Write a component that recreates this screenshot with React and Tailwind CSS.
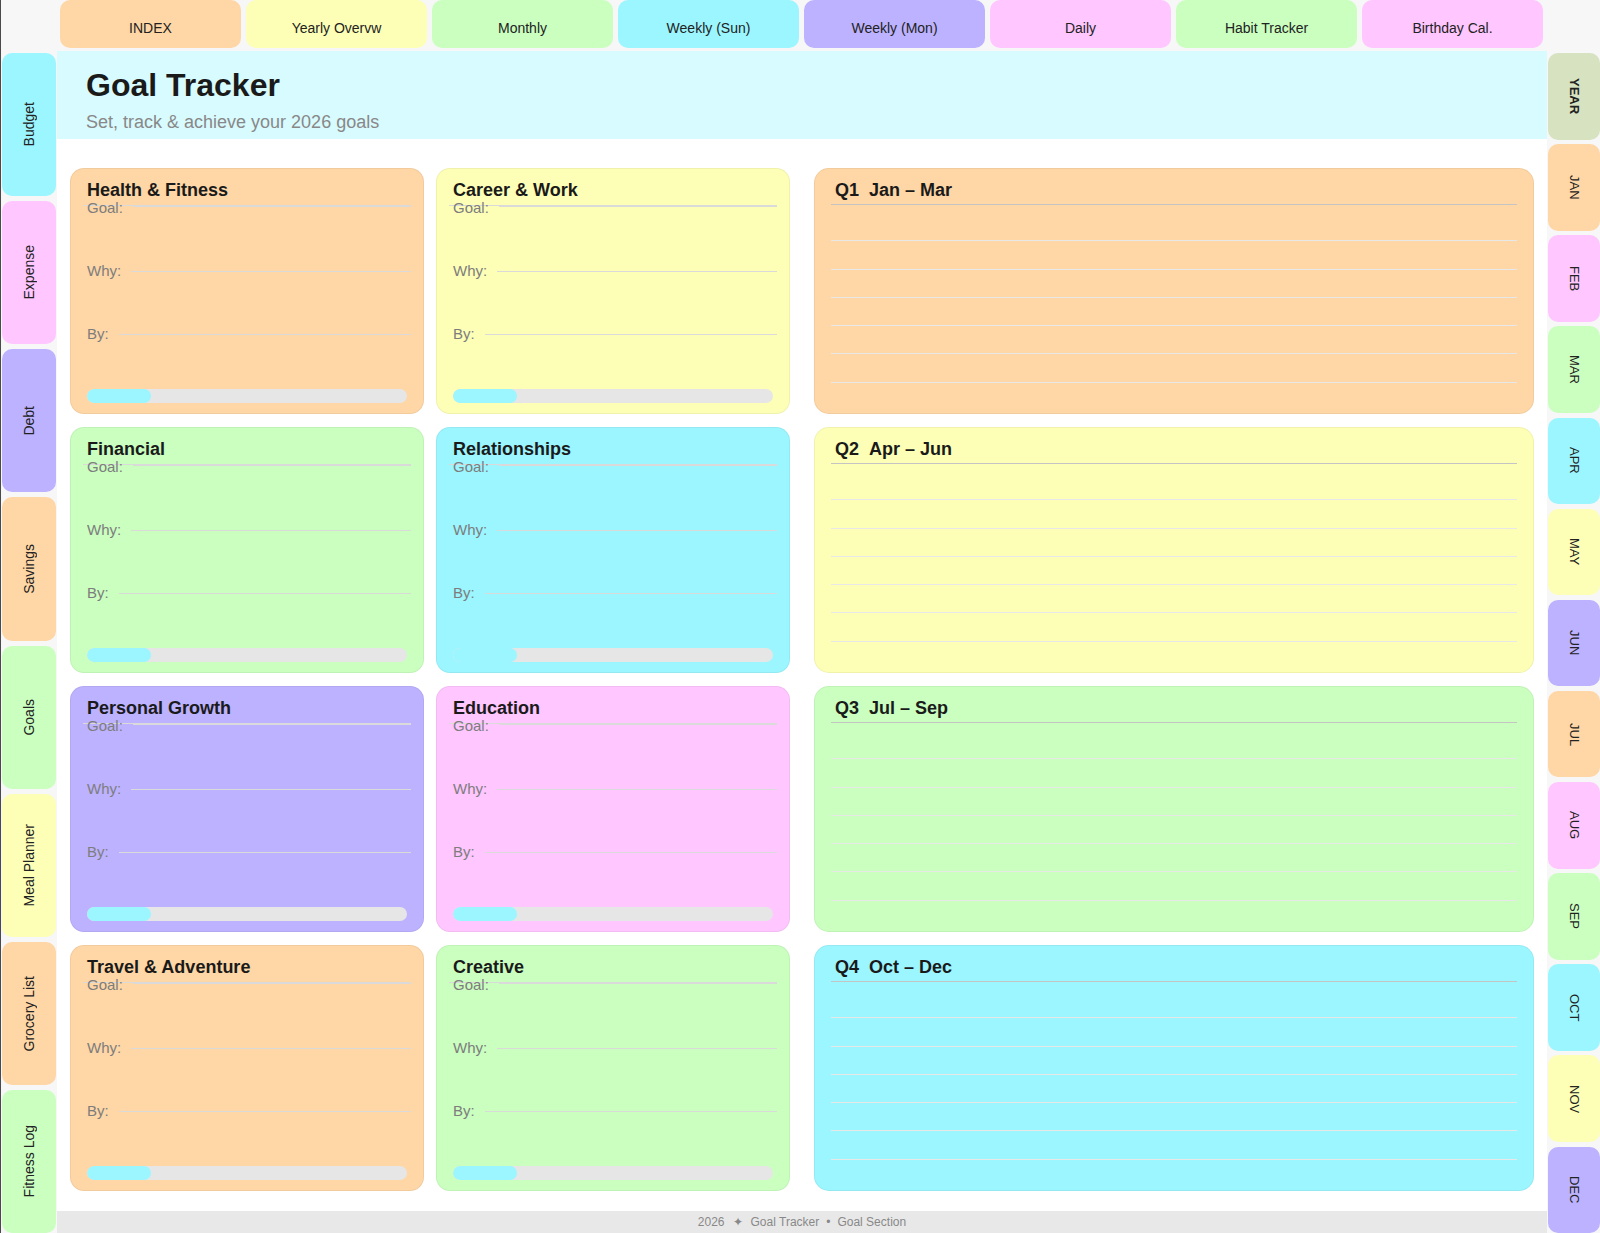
import React from 'react';

const BG = {
  peach: 'bg-[#ffd6a5]',
  yellow: 'bg-[#fdffb6]',
  green: 'bg-[#caffbf]',
  cyan: 'bg-[#9bf6ff]',
  purple: 'bg-[#bdb2ff]',
  pink: 'bg-[#ffc6ff]',
  sage: 'bg-[#d6e2c0]',
};

const topTabs = [
  ['INDEX', 'peach'],
  ['Yearly Overvw', 'yellow'],
  ['Monthly', 'green'],
  ['Weekly (Sun)', 'cyan'],
  ['Weekly (Mon)', 'purple'],
  ['Daily', 'pink'],
  ['Habit Tracker', 'green'],
  ['Birthday Cal.', 'pink'],
];

const leftTabs = [
  ['Budget', 'cyan'],
  ['Expense', 'pink'],
  ['Debt', 'purple'],
  ['Savings', 'peach'],
  ['Goals', 'green'],
  ['Meal Planner', 'yellow'],
  ['Grocery List', 'peach'],
  ['Fitness Log', 'green'],
];

const rightTabs = [
  ['YEAR', 'sage'],
  ['JAN', 'peach'],
  ['FEB', 'pink'],
  ['MAR', 'green'],
  ['APR', 'cyan'],
  ['MAY', 'yellow'],
  ['JUN', 'purple'],
  ['JUL', 'peach'],
  ['AUG', 'pink'],
  ['SEP', 'green'],
  ['OCT', 'cyan'],
  ['NOV', 'yellow'],
  ['DEC', 'purple'],
];

const goals = [
  ['Health & Fitness', 'peach'],
  ['Career & Work', 'yellow'],
  ['Financial', 'green'],
  ['Relationships', 'cyan'],
  ['Personal Growth', 'purple'],
  ['Education', 'pink'],
  ['Travel & Adventure', 'peach'],
  ['Creative', 'green'],
];

const quarters = [
  ['Q1', 'Jan – Mar', 'peach'],
  ['Q2', 'Apr – Jun', 'yellow'],
  ['Q3', 'Jul – Sep', 'green'],
  ['Q4', 'Oct – Dec', 'cyan'],
];

function Field({ label, first }) {
  return (
    <div className={`flex items-center h-[20px] ${first ? '-mt-[8px]' : 'mt-[43px]'}`}>
      <span className="text-[15px] leading-[20px] text-[#7d7d7d]">{label}</span>
      <div className={`flex-1 h-px bg-[#dadada] ml-[10px] -mr-1 ${first ? 'self-start mt-[8px]' : ''}`} />
    </div>
  );
}

function GoalCard({ title, color }) {
  return (
    <div className={`${BG[color]} rounded-[14px] border border-black/5 flex flex-col px-4 pt-[10px] pb-[10px]`}>
      <h3 className="text-[18px] leading-[22px] font-bold text-[#1a1a1a] border-b border-[#dadada] -mx-1 px-1 pb-[4px]">
        {title}
      </h3>
      <Field label="Goal:" first />
      <Field label="Why:" />
      <Field label="By:" />
      <div className="mt-auto h-[14px] rounded-full bg-[#e6e6e6] overflow-hidden">
        <div className="h-full w-[20%] rounded-full bg-[#9bf6ff]" />
      </div>
    </div>
  );
}

function QuarterCard({ q, range, color }) {
  return (
    <div className={`${BG[color]} rounded-[15px] border border-black/5 flex flex-col px-4 pt-[10px]`}>
      <h3 className="text-[18px] leading-[22px] font-bold text-[#1a1a1a] border-b border-[#c4c4c4] px-1 pb-[3px]">
        <span className="mr-[10px]">{q}</span>
        {range}
      </h3>
      <div className="mt-[8px]">
        {[0, 1, 2, 3, 4, 5].map((i) => (
          <div key={i} className="h-[28.3px] border-b border-[#e8e8e8]" />
        ))}
      </div>
    </div>
  );
}

export default function App() {
  return (
    <div className="w-[1600px] h-[1233px] bg-[#f7f7f7] border-l border-[#4a4a4a] flex flex-col overflow-hidden font-['Liberation_Sans',Arial,sans-serif] text-[#222]">
      {/* top tabs */}
      <div className="h-[51px] flex items-start gap-[5px] pl-[59px] shrink-0">
        {topTabs.map(([name, c]) => (
          <div
            key={name}
            className={`${BG[c]} w-[181px] h-[48px] rounded-[10px] flex items-center justify-center pt-[8px] text-[14px] text-[#222]`}
          >
            {name}
          </div>
        ))}
      </div>

      <div className="flex flex-1 min-h-0">
        {/* left sidebar */}
        <aside className="w-[56px] flex flex-col gap-[5px] pt-[2px] px-[1px] shrink-0">
          {leftTabs.map(([name, c]) => (
            <div
              key={name}
              className={`${BG[c]} flex-1 rounded-[10px] flex items-center justify-center`}
            >
              <span className="[writing-mode:vertical-rl] rotate-180 text-[14px] text-[#222] whitespace-nowrap">
                {name}
              </span>
            </div>
          ))}
        </aside>

        {/* main */}
        <main className="w-[1490px] bg-white flex flex-col shrink-0">
          <header className="h-[88px] bg-[#d8fbff] pl-[29px] pt-[15px] shrink-0">
            <h1 className="text-[32px] leading-[38px] font-bold text-[#1a1a1a]">Goal Tracker</h1>
            <p className="mt-[6px] text-[18px] leading-[24px] text-[#888]">
              Set, track &amp; achieve your 2026 goals
            </p>
          </header>

          <div className="flex-1 min-h-0 grid grid-cols-2 gap-x-[24px] px-[13px] pt-[29px] pb-[20px]">
            <div className="grid grid-cols-2 grid-rows-4 gap-x-[12px] gap-y-[13px]">
              {goals.map(([t, c]) => (
                <GoalCard key={t} title={t} color={c} />
              ))}
            </div>
            <div className="grid grid-rows-4 gap-y-[13px]">
              {quarters.map(([q, r, c]) => (
                <QuarterCard key={q} q={q} range={r} color={c} />
              ))}
            </div>
          </div>

          <footer className="h-[22px] bg-[#e8e8e8] flex items-center justify-center text-[12px] leading-[16px] text-[#888] shrink-0">
            <span>2026</span>
            <span className="mx-[8px]">✦</span>
            <span>Goal Tracker</span>
            <span className="mx-[7px]">•</span>
            <span>Goal Section</span>
          </footer>
        </main>

        {/* right sidebar */}
        <aside className="w-[53px] flex flex-col gap-[4.6px] pt-[2px] pl-[1px] shrink-0">
          {rightTabs.map(([name, c]) => (
            <div
              key={name}
              className={`${BG[c]} flex-1 rounded-[10px] flex items-center justify-center`}
            >
              <span
                className={`[writing-mode:vertical-rl] text-[13px] text-[#222] whitespace-nowrap ${
                  name === 'YEAR' ? 'font-bold' : ''
                }`}
              >
                {name}
              </span>
            </div>
          ))}
        </aside>
      </div>
    </div>
  );
}
